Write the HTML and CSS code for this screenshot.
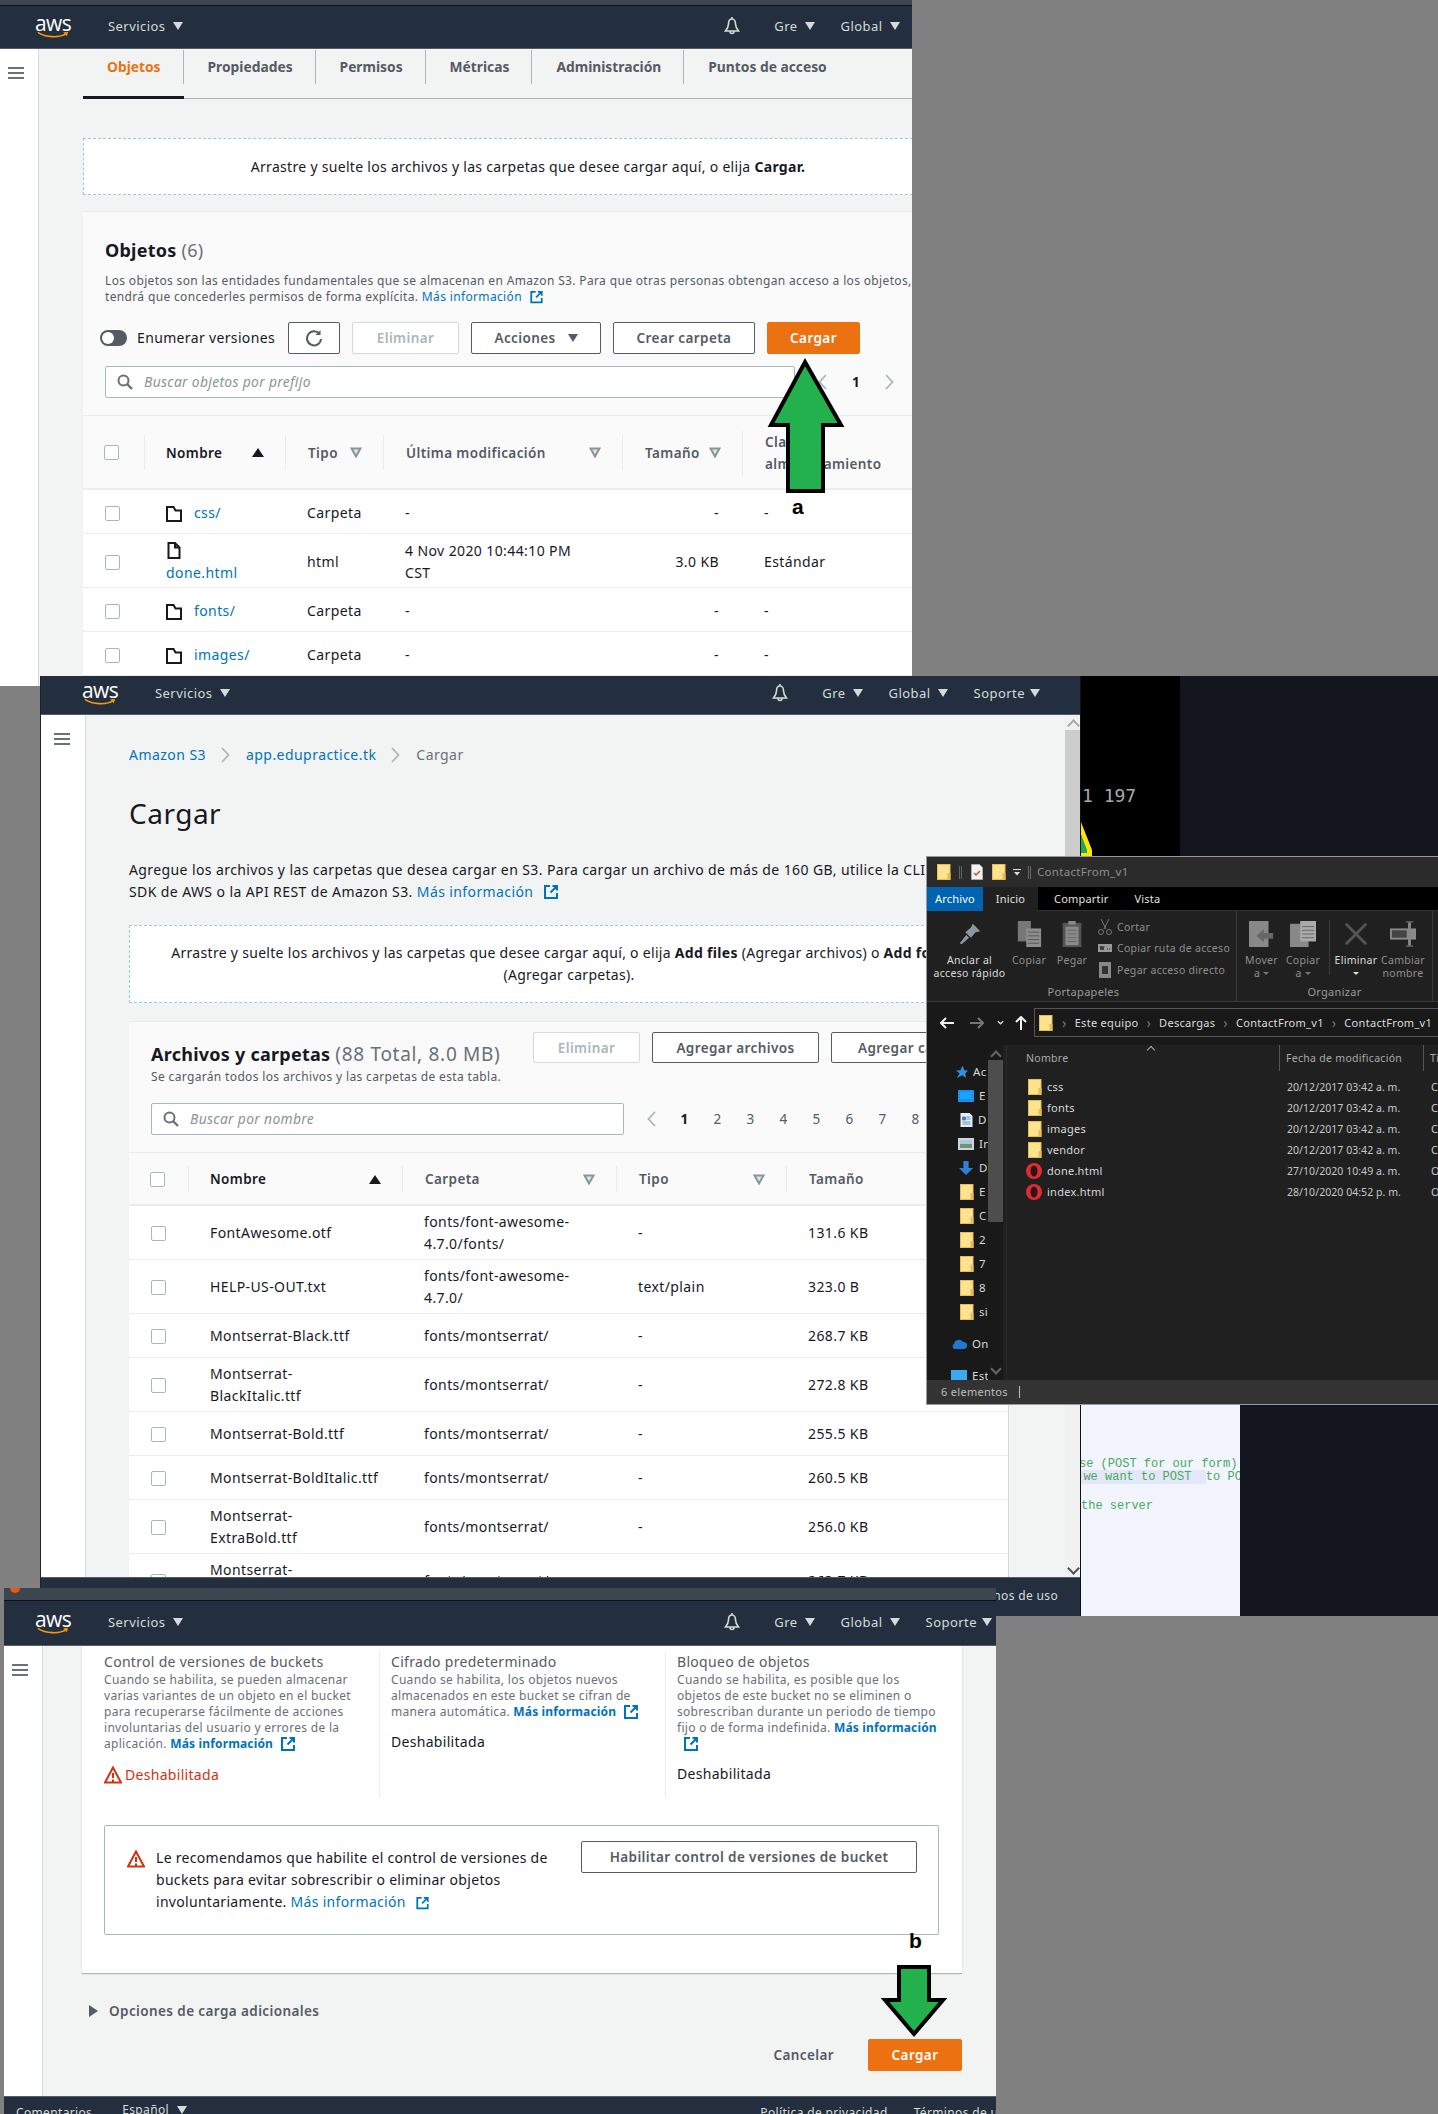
FILE: index.html
```html
<!DOCTYPE html>
<html lang="es">
<head>
<meta charset="utf-8">
<title>Amazon S3</title>
<link rel="stylesheet" href="styles.css">
</head>
<body>
<svg class="defs" aria-hidden="true">
  <symbol id="ext" viewBox="0 0 16 16"><path d="M7 2H2v12h12V9M9.500 2H14v4.500M14 2L7.500 8.500" fill="none" stroke="#0073bb" stroke-width="2"/></symbol>
  <symbol id="bell" viewBox="0 0 18 20"><path d="M9 2C6.500 2 5.500 4.500 5.500 7c0 3-1.500 5-3 7h13c-1.500-2-3-4-3-7C12.500 4.500 11.500 2 9 2zM9 0v2M7 14.500a2 2 0 0 0 4 0" fill="none" stroke="#d5dbdb" stroke-width="1.600"/></symbol>
  <symbol id="smile" viewBox="0 0 36 9"><path d="M1 1.500C10 7.500 25 8 33 3" fill="none" stroke="#f90" stroke-width="1.800"/><path d="M29.500 1.500L35 1l-1.500 5z" fill="#f90"/></symbol>
  <symbol id="burger" viewBox="0 0 16 13"><path d="M0 1h16v2H0zM0 6h16v2H0zM0 11h16v2H0z" fill="#687078"/></symbol>
  <symbol id="search" viewBox="0 0 16 16"><circle cx="6.500" cy="6.500" r="5" fill="none" stroke="#687078" stroke-width="2"/><path d="M10 10l5 5" stroke="#687078" stroke-width="2.400"/></symbol>
  <symbol id="folder" viewBox="0 0 16 17"><path d="M1 2h6.500l2 3.500H15V16H1z" fill="none" stroke="#16191f" stroke-width="2"/></symbol>
  <symbol id="file" viewBox="0 0 16 17"><path d="M2.500 1H9l4.500 4.500V16h-11zM9 1v4.500h4.500" fill="none" stroke="#16191f" stroke-width="2"/></symbol>
  <symbol id="warn" viewBox="0 0 18 18"><path d="M9 1.500L1 16.500h16zM9 7v5M9 13.500v2" fill="none" stroke="#d13212" stroke-width="2"/></symbol>
  <symbol id="yfolder" viewBox="0 0 14 16"><rect x=".5" y=".5" width="12.500" height="15" fill="#fde38e" stroke="#e8bb55"/><rect x="10.500" y="9" width="3" height="7" fill="#e8bb55"/></symbol>
  <symbol id="opera" viewBox="0 0 16 16"><circle cx="8" cy="8" r="8" fill="#e22a32"/><ellipse cx="8" cy="8" rx="3.500" ry="5.500" fill="#2a1416"/></symbol>
  <symbol id="sortd" viewBox="0 0 12 11"><path d="M1.500 1.500h9L6 9.500z" fill="#dfe4e4" stroke="#879596" stroke-width="2"/></symbol>
  <symbol id="chev-l" viewBox="0 0 9 16"><path d="M8 1L1.500 8 8 15" fill="none" stroke="#aab7b8" stroke-width="1.800"/></symbol>
  <symbol id="chev-r" viewBox="0 0 9 16"><path d="M1 1l6.500 7L1 15" fill="none" stroke="#aab7b8" stroke-width="1.800"/></symbol>
</svg>

<div class="desktop">

  <!-- Fragments of windows behind -->
  <div class="bg-black"><span class="bg-num">1 197</span>
    <svg class="bg-tri" viewBox="0 0 12 34"><path d="M0 0L11 28v6H0z" fill="#ffe600"/><path d="M0 12L6 28v3H0z" fill="#1ea55a"/></svg>
  </div>
  <div class="bg-dark-top"></div>
  <div class="bg-editor">
    <div class="code code-a">se (POST for our form)</div>
    <div class="code code-b"><span class="code-hl">e we want to POST  </span>to POST</div>
    <div class="code code-c">the server</div>
  </div>
  <div class="bg-dark-bottom"></div>

  <!-- WINDOW 1 : objects -->
  <section class="win win-objects">
    <div class="strip"></div>
    <header class="nav nav-wide">
      <div class="logo"><span class="logo-text">aws</span><svg class="logo-smile"><use href="#smile"/></svg></div>
      <span class="nav-item nav-services">Servicios<i class="caret"></i></span>
      <svg class="nav-bell"><use href="#bell"/></svg>
      <span class="nav-item nav-gre">Gre<i class="caret"></i></span>
      <span class="nav-item nav-global">Global<i class="caret"></i></span>
      <span class="nav-item nav-support">Soporte<i class="caret"></i></span>
    </header>
    <div class="layout">
      <aside class="side"><svg class="burger"><use href="#burger"/></svg></aside>
      <main class="content content-objects">
        <nav class="tabs">
          <a class="tab tab-active"><span class="tab-label">Objetos</span></a>
          <a class="tab"><span class="tab-label">Propiedades</span></a>
          <a class="tab"><span class="tab-label">Permisos</span></a>
          <a class="tab"><span class="tab-label">Métricas</span></a>
          <a class="tab"><span class="tab-label">Administración</span></a>
          <a class="tab"><span class="tab-label tab-last">Puntos de acceso</span></a>
        </nav>
        <div class="drop drop-objects"><span>Arrastre y suelte los archivos y las carpetas que desee cargar aquí, o elija <b>Cargar.</b></span></div>
        <section class="panel panel-objects">
          <div class="obj-head">
            <h2 class="panel-title">Objetos <span class="muted-count">(6)</span></h2>
            <p class="small-desc">Los objetos son las entidades fundamentales que se almacenan en Amazon S3. Para que otras personas obtengan acceso a los objetos,<br>tendrá que concederles permisos de forma explícita. <a class="link">Más información</a><svg class="ext"><use href="#ext"/></svg></p>
            <div class="toolbar">
              <span class="toggle"></span>
              <span class="toggle-label">Enumerar versiones</span>
              <button class="btn btn-refresh"><svg viewBox="0 0 18 18" class="refresh"><path d="M14.500 5A7 7 0 1 0 16 10" fill="none" stroke="#545b64" stroke-width="2"/><path d="M15.500 1v5h-5z" fill="#545b64"/></svg></button>
              <button class="btn btn-dis w107">Eliminar</button>
              <button class="btn w130">Acciones<i class="caret caret-dark"></i></button>
              <button class="btn w142">Crear carpeta</button>
              <button class="btn btn-primary w93">Cargar</button>
            </div>
            <div class="search-row">
              <div class="search search-objects"><svg class="search-ic"><use href="#search"/></svg><span>Buscar objetos por prefijo</span></div>
              <div class="pager pager-objects"><svg class="pg-arrow"><use href="#chev-l"/></svg><b>1</b><svg class="pg-arrow"><use href="#chev-r"/></svg></div>
            </div>
          </div>
          <div class="grid grid-a thead">
            <div class="th"><span class="cb"></span></div>
            <div class="th th-line strong">Nombre<i class="sort-up"></i></div>
            <div class="th th-line">Tipo<svg class="sort"><use href="#sortd"/></svg></div>
            <div class="th th-line">Última modificación<svg class="sort"><use href="#sortd"/></svg></div>
            <div class="th th-line">Tamaño<svg class="sort"><use href="#sortd"/></svg></div>
            <div class="th th-line th-two">Clase de<br>almacenamiento</div>
          </div>
          <div class="grid grid-a row">
            <div class="td"><span class="cb"></span></div>
            <div class="td"><svg class="ficon"><use href="#folder"/></svg><a class="link">css/</a></div>
            <div class="td">Carpeta</div><div class="td">-</div><div class="td td-right">-</div><div class="td">-</div>
          </div>
          <div class="grid grid-a row">
            <div class="td"><span class="cb"></span></div>
            <div class="td td-stack"><svg class="ficon"><use href="#file"/></svg><a class="link">done.html</a></div>
            <div class="td">html</div><div class="td">4 Nov 2020 10:44:10 PM<br>CST</div><div class="td td-right">3.0 KB</div><div class="td">Estándar</div>
          </div>
          <div class="grid grid-a row">
            <div class="td"><span class="cb"></span></div>
            <div class="td"><svg class="ficon"><use href="#folder"/></svg><a class="link">fonts/</a></div>
            <div class="td">Carpeta</div><div class="td">-</div><div class="td td-right">-</div><div class="td">-</div>
          </div>
          <div class="grid grid-a row">
            <div class="td"><span class="cb"></span></div>
            <div class="td"><svg class="ficon"><use href="#folder"/></svg><a class="link">images/</a></div>
            <div class="td">Carpeta</div><div class="td">-</div><div class="td td-right">-</div><div class="td">-</div>
          </div>
        </section>
      </main>
    </div>
  </section>

  <!-- WINDOW 2 : upload -->
  <section class="win win-upload">
    <header class="nav nav-upload">
      <div class="logo"><span class="logo-text">aws</span><svg class="logo-smile"><use href="#smile"/></svg></div>
      <span class="nav-item nav-services">Servicios<i class="caret"></i></span>
      <svg class="nav-bell"><use href="#bell"/></svg>
      <span class="nav-item nav-gre">Gre<i class="caret"></i></span>
      <span class="nav-item nav-global">Global<i class="caret"></i></span>
      <span class="nav-item nav-support">Soporte<i class="caret"></i></span>
    </header>
    <div class="layout layout-upload">
      <aside class="side side-upload"><svg class="burger"><use href="#burger"/></svg></aside>
      <main class="content content-upload">
        <nav class="crumbs"><a class="link">Amazon S3</a><svg class="crumb-sep"><use href="#chev-r"/></svg><a class="link">app.edupractice.tk</a><svg class="crumb-sep"><use href="#chev-r"/></svg><span class="crumb-now">Cargar</span></nav>
        <h1 class="h1">Cargar</h1>
        <p class="lead">Agregue los archivos y las carpetas que desea cargar en S3. Para cargar un archivo de más de 160 GB, utilice la CLI de AWS, los<br>SDK de AWS o la API REST de Amazon S3. <a class="link">Más información</a><svg class="ext ext-lg"><use href="#ext"/></svg></p>
        <div class="drop drop-upload"><span>Arrastre y suelte los archivos y las carpetas que desee cargar aquí, o elija <b>Add files</b> (Agregar archivos) o <b>Add folders</b><br>(Agregar carpetas).</span></div>
        <section class="panel panel-upload">
          <div class="up-head">
            <div class="up-top">
              <div class="up-title">
                <h2 class="panel-title">Archivos y carpetas <span class="muted-count count-lg">(88 Total, 8.0 MB)</span></h2>
                <p class="small-desc up-sub">Se cargarán todos los archivos y las carpetas de esta tabla.</p>
              </div>
              <button class="btn btn-dis w107 up-btn">Eliminar</button>
              <button class="btn w167 up-btn">Agregar archivos</button>
              <button class="btn w167 up-btn up-btn3">Agregar carpeta</button>
            </div>
            <div class="search-row">
              <div class="search search-upload"><svg class="search-ic"><use href="#search"/></svg><span>Buscar por nombre</span></div>
              <div class="pager pager-upload"><svg class="pg-arrow"><use href="#chev-l"/></svg><b>1</b><span>2</span><span>3</span><span>4</span><span>5</span><span>6</span><span>7</span><span>8</span></div>
            </div>
          </div>
          <div class="grid grid-b thead thead-b">
            <div class="th"><span class="cb"></span></div>
            <div class="th th-line strong">Nombre<i class="sort-up"></i></div>
            <div class="th th-line">Carpeta<svg class="sort"><use href="#sortd"/></svg></div>
            <div class="th th-line">Tipo<svg class="sort"><use href="#sortd"/></svg></div>
            <div class="th th-line">Tamaño</div>
          </div>
          <div class="grid grid-b row"><div class="td"><span class="cb"></span></div><div class="td">FontAwesome.otf</div><div class="td">fonts/font-awesome-<br>4.7.0/fonts/</div><div class="td">-</div><div class="td">131.6 KB</div></div>
          <div class="grid grid-b row"><div class="td"><span class="cb"></span></div><div class="td">HELP-US-OUT.txt</div><div class="td">fonts/font-awesome-<br>4.7.0/</div><div class="td">text/plain</div><div class="td">323.0 B</div></div>
          <div class="grid grid-b row"><div class="td"><span class="cb"></span></div><div class="td">Montserrat-Black.ttf</div><div class="td">fonts/montserrat/</div><div class="td">-</div><div class="td">268.7 KB</div></div>
          <div class="grid grid-b row"><div class="td"><span class="cb"></span></div><div class="td">Montserrat-<br>BlackItalic.ttf</div><div class="td">fonts/montserrat/</div><div class="td">-</div><div class="td">272.8 KB</div></div>
          <div class="grid grid-b row"><div class="td"><span class="cb"></span></div><div class="td">Montserrat-Bold.ttf</div><div class="td">fonts/montserrat/</div><div class="td">-</div><div class="td">255.5 KB</div></div>
          <div class="grid grid-b row"><div class="td"><span class="cb"></span></div><div class="td">Montserrat-BoldItalic.ttf</div><div class="td">fonts/montserrat/</div><div class="td">-</div><div class="td">260.5 KB</div></div>
          <div class="grid grid-b row"><div class="td"><span class="cb"></span></div><div class="td">Montserrat-<br>ExtraBold.ttf</div><div class="td">fonts/montserrat/</div><div class="td">-</div><div class="td">256.0 KB</div></div>
          <div class="grid grid-b row"><div class="td"><span class="cb"></span></div><div class="td">Montserrat-<br>ExtraBoldItalic.ttf</div><div class="td">fonts/montserrat/</div><div class="td">-</div><div class="td">263.7 KB</div></div>
        </section>
      </main>
      <div class="scroll"><span class="sc-up"></span><span class="sc-thumb"></span><span class="sc-down"></span></div>
    </div>
    <footer class="foot foot-upload"><span class="foot-right">Política de privacidad</span><span class="foot-right">Términos de uso</span></footer>
  </section>

  <!-- WINDOW 3 : file explorer -->
  <section class="win win-explorer">
    <div class="ex-title">
      <svg class="yf"><use href="#yfolder"/></svg><i class="ex-bar"></i>
      <svg class="qa-check" viewBox="0 0 12 16"><path d="M.5.5h8l3 3v12H.5z" fill="#f4f4f4" stroke="#aaa"/><path d="M3 9l2 2 4-4" fill="none" stroke="#e0481a" stroke-width="1.500"/></svg>
      <svg class="yf"><use href="#yfolder"/></svg>
      <svg class="qa-down" viewBox="0 0 8 8"><path d="M0 1h8v1H0zM1 4h6L4 7.500z" fill="#ddd"/></svg><i class="ex-bar ex-bar-last"></i>
      <span class="ex-name">ContactFrom_v1</span>
    </div>
    <div class="ex-tabs">
      <span class="ex-tab ex-tab-file">Archivo</span>
      <span class="ex-tab ex-tab-home">Inicio</span>
      <span class="ex-tab ex-tab-share">Compartir</span>
      <span class="ex-tab ex-tab-view">Vista</span>
    </div>
    <div class="ribbon">
      <div class="rib-group rib-clip">
        <div class="rib-tools">
          <div class="rib-big rib-pin bright"><svg class="rib-ic" viewBox="0 0 28 28"><path d="M17 3l8 8-5 1-5 6-6-6 6-5zM10 15l-7 9 2 1 8-7" fill="#8a98a0"/></svg><span>Anclar al<br>acceso rápido</span></div>
          <div class="rib-big rib-copy"><svg class="rib-ic" viewBox="0 0 28 28"><path d="M2 0h14v22H2z" fill="#777"/><path d="M11 8h16v20H11z" fill="#8d8d8d"/><path d="M13 12h12M13 16h12M13 20h12M13 24h12" stroke="#555"/></svg><span>Copiar</span></div>
          <div class="rib-big rib-paste"><svg class="rib-ic" viewBox="0 0 28 28"><path d="M4 2h20v26H4z" fill="#555"/><path d="M7 6h14v20H7z" fill="#8a8a8a"/><path d="M9 10h10M9 14h10M9 18h10M9 22h10" stroke="#666"/><path d="M10 0h8v4h-8z" fill="#888"/></svg><span>Pegar</span></div>
          <div class="rib-stack">
            <div class="rib-small"><svg viewBox="0 0 14 16"><path d="M3 0l5 10M11 0L6 10" stroke="#777"/><circle cx="3" cy="13" r="2.500" fill="none" stroke="#777"/><circle cx="11" cy="13" r="2.500" fill="none" stroke="#777"/></svg><span>Cortar</span></div>
            <div class="rib-small"><svg viewBox="0 0 14 16"><path d="M0 4h14v8H0z" fill="#999"/><path d="M2 6l1 4 1-4 1 4 1-4M9 9h1M11 9h1" stroke="#333" fill="none"/></svg><span>Copiar ruta de acceso</span></div>
            <div class="rib-small"><svg viewBox="0 0 14 16"><path d="M1 0h12v16H1z" fill="#888"/><path d="M4 4h6v8H4z" fill="#333"/></svg><span>Pegar acceso directo</span></div>
          </div>
        </div>
        <div class="rib-label">Portapapeles</div>
      </div>
      <div class="rib-group rib-org">
        <div class="rib-tools">
          <div class="rib-big rib-move"><svg class="rib-ic" viewBox="0 0 28 28"><path d="M0 0h21v28H0z" fill="#888"/><path d="M26 13H16V9l-8 7 8 7v-4h10z" fill="#666"/></svg><span>Mover<br>a <i class="mini-caret"></i></span></div>
          <div class="rib-big rib-copyto"><svg class="rib-ic" viewBox="0 0 28 28"><path d="M0 3h20v25H0z" fill="#888"/><path d="M11 0h17v22H11z" fill="#aaa"/><path d="M13 6h13M13 10h13M13 14h13M13 18h13" stroke="#666"/></svg><span>Copiar<br>a <i class="mini-caret"></i></span></div>
          <i class="rib-sep"></i>
          <div class="rib-big rib-del bright"><svg class="rib-ic" viewBox="0 0 28 28"><path d="M3 3l22 22M25 3L3 25" stroke="#555" stroke-width="3"/></svg><span>Eliminar<br><i class="mini-caret mini-bright"></i></span></div>
          <div class="rib-big rib-ren"><svg class="rib-ic" viewBox="0 0 28 28"><path d="M0 8h28v12H0z" fill="#8a8a8a"/><path d="M2 10h16v8H2z" fill="#444"/><path d="M20 2h2v24h-2zM17 1h8M17 27h8" stroke="#888" fill="#888"/></svg><span>Cambiar<br>nombre</span></div>
        </div>
        <div class="rib-label">Organizar</div>
      </div>
    </div>
    <div class="ex-addr">
      <svg class="ex-arrow" viewBox="0 0 14 12"><path d="M6 1L1 6l5 5M1 6h13" fill="none" stroke="#f2f2f2" stroke-width="2"/></svg>
      <svg class="ex-arrow ex-fwd" viewBox="0 0 14 12"><path d="M8 1l5 5-5 5M13 6H0" fill="none" stroke="#777" stroke-width="2"/></svg>
      <svg class="ex-hist" viewBox="0 0 8 5"><path d="M1 1l3 3 3-3" fill="none" stroke="#ddd" stroke-width="1.500"/></svg>
      <svg class="ex-arrow ex-upa" viewBox="0 0 12 14"><path d="M1 6l5-5 5 5M6 1v13" fill="none" stroke="#f2f2f2" stroke-width="2"/></svg>
      <div class="ex-path">
        <svg class="yf"><use href="#yfolder"/></svg>
        <i class="pth">&#x203A;</i><span>Este equipo</span><i class="pth">&#x203A;</i><span>Descargas</span><i class="pth">&#x203A;</i><span>ContactFrom_v1</span><i class="pth">&#x203A;</i><span>ContactFrom_v1</span>
      </div>
    </div>
    <div class="ex-main">
      <div class="ex-tree">
        <div class="tr tr-pin"><svg class="tr-ic" viewBox="0 0 14 14"><path d="M8 0l2 5 4 .5-3 3 1 5-4-3-6 3 3-5-4-3 5-.5z" fill="#2f8fe0"/></svg><span>Ac</span></div>
        <div class="tr"><svg class="tr-ic tr-ic16" viewBox="0 0 16 12"><path d="M0 0h16v12H0z" fill="#1e8fe8"/><path d="M2 2h12v7H2z" fill="#19a1ff"/></svg><span>E</span></div>
        <div class="tr"><svg class="tr-ic" viewBox="0 0 12 14"><path d="M0 0h9l3 3v11H0z" fill="#e8eef4"/><path d="M2 4h3v3H2zM6 4h4M6 6h4M2 9h8M2 11h8" stroke="#3d7fc4" fill="#3d7fc4" stroke-width=".8"/></svg><span>D</span></div>
        <div class="tr"><svg class="tr-ic tr-ic16" viewBox="0 0 16 12"><path d="M0 0h16v12H0z" fill="#cfd6dc"/><path d="M2 2h12v8H2z" fill="#6f9278"/><path d="M2 2h12v4H2z" fill="#a8c8e0"/></svg><span>Ir</span></div>
        <div class="tr"><svg class="tr-ic tr-ic16" viewBox="0 0 16 16"><path d="M5 0h6v8h5l-8 8-8-8h5z" fill="#2f7fd6"/></svg><span>D</span></div>
        <div class="tr"><svg class="yf"><use href="#yfolder"/></svg><span>E</span></div>
        <div class="tr"><svg class="yf"><use href="#yfolder"/></svg><span>C</span></div>
        <div class="tr"><svg class="yf"><use href="#yfolder"/></svg><span>2</span></div>
        <div class="tr"><svg class="yf"><use href="#yfolder"/></svg><span>7</span></div>
        <div class="tr"><svg class="yf"><use href="#yfolder"/></svg><span>8</span></div>
        <div class="tr"><svg class="yf"><use href="#yfolder"/></svg><span>si</span></div>
        <div class="tr tr-cloud"><svg class="tr-ic tr-ic16" viewBox="0 0 16 10"><path d="M3 10a3 3 0 0 1 0-5 5 5 0 0 1 9-2 3.500 3.500 0 0 1 1 7z" fill="#1f78d1"/></svg><span>On</span></div>
        <div class="tr tr-pc"><svg class="tr-ic tr-ic16" viewBox="0 0 16 12"><path d="M0 0h16v10H0z" fill="#3aa9ee"/><path d="M6 10h4v2H6z" fill="#aaa"/></svg><span>Est</span></div>
      </div>
      <div class="ex-scroll"><i class="ex-sc-up"></i><i class="ex-sc-thumb"></i><i class="ex-sc-down"></i></div>
      <div class="ex-files">
        <div class="ex-cols">
          <span class="col-name">Nombre<i class="col-sort"></i></span>
          <span class="col-date">Fecha de modificación</span>
          <span class="col-type">Tipo</span>
        </div>
        <div class="ex-row"><svg class="yf"><use href="#yfolder"/></svg><span class="f-name">css</span><span class="f-date">20/12/2017 03:42 a. m.</span><span class="f-type">Carpeta de archivos</span></div>
        <div class="ex-row"><svg class="yf"><use href="#yfolder"/></svg><span class="f-name">fonts</span><span class="f-date">20/12/2017 03:42 a. m.</span><span class="f-type">Carpeta de archivos</span></div>
        <div class="ex-row"><svg class="yf"><use href="#yfolder"/></svg><span class="f-name">images</span><span class="f-date">20/12/2017 03:42 a. m.</span><span class="f-type">Carpeta de archivos</span></div>
        <div class="ex-row"><svg class="yf"><use href="#yfolder"/></svg><span class="f-name">vendor</span><span class="f-date">20/12/2017 03:42 a. m.</span><span class="f-type">Carpeta de archivos</span></div>
        <div class="ex-row"><svg class="yf yf-op"><use href="#opera"/></svg><span class="f-name">done.html</span><span class="f-date">27/10/2020 10:49 a. m.</span><span class="f-type">Opera Web</span></div>
        <div class="ex-row"><svg class="yf yf-op"><use href="#opera"/></svg><span class="f-name">index.html</span><span class="f-date">28/10/2020 04:52 p. m.</span><span class="f-type">Opera Web</span></div>
      </div>
    </div>
    <div class="ex-status"><span>6 elementos</span><i></i></div>
  </section>

  <!-- WINDOW 4 : upload bottom -->
  <section class="win win-confirm">
    <div class="strip strip-tall"><i class="dot"></i></div>
    <header class="nav nav-confirm">
      <div class="logo"><span class="logo-text">aws</span><svg class="logo-smile"><use href="#smile"/></svg></div>
      <span class="nav-item nav-services">Servicios<i class="caret"></i></span>
      <svg class="nav-bell"><use href="#bell"/></svg>
      <span class="nav-item nav-gre">Gre<i class="caret"></i></span>
      <span class="nav-item nav-global">Global<i class="caret"></i></span>
      <span class="nav-item nav-support">Soporte<i class="caret"></i></span>
    </header>
    <div class="layout layout-confirm">
      <aside class="side"><svg class="burger"><use href="#burger"/></svg></aside>
      <main class="content content-confirm">
        <section class="card">
          <div class="props">
            <div class="prop prop-first">
              <h3 class="prop-title">Control de versiones de buckets</h3>
              <p class="prop-desc">Cuando se habilita, se pueden almacenar<br>varias variantes de un objeto en el bucket<br>para recuperarse fácilmente de acciones<br>involuntarias del usuario y errores de la<br>aplicación. <a class="link-b">Más información</a><svg class="ext"><use href="#ext"/></svg></p>
              <div class="prop-value prop-bad"><svg class="warn-sm"><use href="#warn"/></svg>Deshabilitada</div>
            </div>
            <div class="prop">
              <h3 class="prop-title">Cifrado predeterminado</h3>
              <p class="prop-desc">Cuando se habilita, los objetos nuevos<br>almacenados en este bucket se cifran de<br>manera automática. <a class="link-b">Más información</a><svg class="ext"><use href="#ext"/></svg></p>
              <div class="prop-value">Deshabilitada</div>
            </div>
            <div class="prop">
              <h3 class="prop-title">Bloqueo de objetos</h3>
              <p class="prop-desc">Cuando se habilita, es posible que los<br>objetos de este bucket no se eliminen o<br>sobrescriban durante un periodo de tiempo<br>fijo o de forma indefinida. <a class="link-b">Más información</a><br><svg class="ext ext-own"><use href="#ext"/></svg></p>
              <div class="prop-value">Deshabilitada</div>
            </div>
          </div>
          <div class="alert">
            <svg class="alert-ic"><use href="#warn"/></svg>
            <p class="alert-text">Le recomendamos que habilite el control de versiones de<br>buckets para evitar sobrescribir o eliminar objetos<br>involuntariamente. <a class="link">Más información</a><svg class="ext ext-alert"><use href="#ext"/></svg></p>
            <button class="btn alert-btn">Habilitar control de versiones de bucket</button>
          </div>
        </section>
        <div class="more"><i class="more-tri"></i>Opciones de carga adicionales</div>
        <div class="actions"><span class="cancel">Cancelar</span><button class="btn btn-primary w94">Cargar</button></div>
      </main>
    </div>
    <footer class="foot foot-confirm"><span class="foot-left">Comentarios</span><span class="foot-lang">Español<i class="caret"></i></span><span class="foot-right">Política de privacidad</span><span class="foot-right">Términos de uso</span></footer>
  </section>

  <!-- Annotations -->
  <svg class="arrow arrow-up" viewBox="0 0 85 145"><path d="M40 7L76 70H58V136H23V70H6z" fill="#22b14c" stroke="#000" stroke-width="4"/></svg>
  <span class="note note-a">a</span>
  <svg class="arrow arrow-down" viewBox="0 0 72 82"><path d="M21 7H51V40H65L36 74 7 40H21z" fill="#22b14c" stroke="#000" stroke-width="4"/></svg>
  <span class="note note-b">b</span>
</div>
</body>
</html>
```

FILE: styles.css
```css
* { box-sizing: border-box; }
html, body { margin: 0; padding: 0; }
body { background: #808080; font: 14px/22px "Noto Sans", "Open Sans", sans-serif; letter-spacing: .35px; color: #16191f; }
p, h1, h2, h3 { margin: 0; font-weight: normal; }
i { font-style: normal; }
button { font: inherit; }
.defs { position: absolute; width: 0; height: 0; }

.desktop { position: relative; width: 1438px; height: 2114px; overflow: hidden; background: #808080; }
.win { position: absolute; overflow: hidden; display: flex; flex-direction: column; }

/* Background fragments */
.bg-black { position: absolute; left: 1081px; top: 676px; width: 99px; height: 180px; background: #000; overflow: hidden; }
.bg-num { position: absolute; left: 1px; top: 108px; font: 18px/24px "DejaVu Sans Mono", monospace; color: #aaa; white-space: pre; letter-spacing: 0; }
.bg-tri { position: absolute; left: 0; top: 146px; width: 12px; height: 34px; }
.bg-dark-top { position: absolute; left: 1180px; top: 676px; width: 258px; height: 180px; background: #14161f; }
.bg-editor { position: absolute; left: 1081px; top: 1405px; width: 159px; height: 211px; background: #f2f4fe; overflow: hidden; }
.bg-dark-bottom { position: absolute; left: 1240px; top: 1405px; width: 198px; height: 211px; background: #14161f; }
.code { position: absolute; left: -2px; font: 12px/14px "Liberation Mono", monospace; letter-spacing: 0; color: #49a95a; white-space: pre; }
.code-a { top: 52px; }
.code-b { top: 65px; left: -12px; }
.code-c { top: 94px; left: 0; }
.code-hl { background: #e3e7f8; }

/* Window placement */
.win-objects { left: 0; top: 0; width: 912px; height: 686px; background: #fff; }
.win-upload { left: 40px; top: 676px; width: 1041px; height: 940px; background: #fff; border-left: 1px solid #222; border-right: 1px solid #111; }
.win-explorer { left: 926px; top: 856px; width: 512px; height: 549px; border: 1px solid #9a9a9a; border-right: 0; background: #202020; }
.win-confirm { left: 4px; top: 1588px; width: 992px; height: 526px; background: #fff; }

/* Nav */
.strip { height: 6px; background: #3b4650; border-bottom: 1px solid #111; flex: none; }
.strip-tall { height: 13px; position: relative; }
.dot { position: absolute; left: 6px; top: -5px; width: 10px; height: 10px; border-radius: 50%; background: #e8590c; }
.nav { flex: none; height: 43px; padding-bottom: 2px; background: #232f3e; border-bottom: 1px solid #545b64; display: flex; align-items: center; color: #d5dbdb; font-size: 13px; letter-spacing: .45px; }
.nav-wide { width: 996px; padding-left: 35px; }
.nav-upload { height: 39px; padding-left: 41px; padding-bottom: 4px; }
.nav-confirm { height: 45px; padding-left: 31px; }
.logo { width: 36px; height: 24px; position: relative; color: #fff; }
.logo-text { display: block; font: 21px/19px "Open Sans", sans-serif; letter-spacing: -.6px; text-align: center; }
.logo-smile { position: absolute; left: 0; top: 17px; width: 36px; height: 8px; }
.nav-item { display: flex; align-items: center; white-space: nowrap; }
.nav-services { margin-left: 37px; }
.nav-bell { width: 18px; height: 20px; margin-left: auto; margin-top: 2px; }
.nav-gre { margin-left: 33px; }
.nav-global { margin-left: 26px; }
.nav-support { margin-left: 26px; margin-right: 4px; }
.nav-upload .nav-support { margin-right: 40px; }
.caret { display: inline-block; width: 0; height: 0; border: 5.500px solid transparent; border-top: 8px solid #d5dbdb; border-bottom: 0; margin-left: 7px; }
.nav-support .caret { margin-left: 5px; }
.caret-dark { border-top-color: #545b64; margin-left: 12px; }

/* Layout */
.layout { flex: 1; display: flex; min-height: 0; }
.side { flex: none; width: 39px; background: #fff; border-right: 1px solid #d5dbdb; padding: 17px 0 0 8px; }
.side-upload { width: 45px; padding-left: 13px; }
.burger { display: block; width: 16px; height: 13px; }
.content { flex: 1; min-width: 0; background: #f2f3f3; overflow: hidden; }
.content-objects { padding-left: 44px; }
.content-upload { padding-left: 43px; }
.content-confirm { padding-left: 39px; }

/* Tabs */
.tabs { display: flex; height: 50px; border-bottom: 1px solid #aab7b8; width: 890px; }
.tab { height: 50px; padding-top: 1px; font-weight: 700; color: #545b64; font-size: 13.800px; letter-spacing: 0; }
.tab-active { color: #ec7211; border-bottom: 3px solid #16191f; }
.tab-label { display: block; height: 34px; line-height: 33px; padding: 0 22px 0 24px; border-right: 1px solid #aab7b8; white-space: nowrap; }
.tab-last { border-right: 0; }

/* Drop zones */
.drop { background: #fff; border: 1px dashed #8fcbe6; display: flex; align-items: center; justify-content: center; text-align: center; white-space: nowrap; letter-spacing: .3px; }
.drop-objects { margin-top: 39px; height: 57px; width: 890px; }
.drop-upload { margin-top: 22px; height: 78px; width: 880px; }
.drop b { font-weight: 700; }

/* Panels */
.panel { background: #fff; box-shadow: 0 -1px 0 #eaeded; }
.panel-objects { margin-top: 17px; width: 890px; }
.panel-upload { margin-top: 19px; width: 880px; border-right: 1px solid #d5dbdb; }
.obj-head { height: 203px; padding: 26px 22px 0; background: #fafafa; }
.panel-title { font-size: 18px; line-height: 24px; font-weight: 700; white-space: nowrap; letter-spacing: .25px; }
.muted-count { font-weight: 400; color: #687078; }
.count-lg { font-size: 19px; letter-spacing: .7px; }
.small-desc { margin-top: 11px; font-size: 12px; line-height: 16px; color: #545b64; white-space: nowrap; }
.link { color: #0073bb; }
.link-b { color: #0073bb; font-weight: 700; letter-spacing: .15px; }
.ext { display: inline-block; width: 15px; height: 14px; margin-left: 7px; vertical-align: -3px; }
.ext-lg { width: 16px; height: 16px; vertical-align: -3px; margin-left: 10px; }

.toolbar { margin-top: 17px; height: 32px; display: flex; align-items: center; }
.toggle { width: 27px; height: 16px; margin-left: -5px; border-radius: 8px; background: #545b64; position: relative; }
.toggle::after { content: ""; position: absolute; left: 2px; top: 2px; width: 12px; height: 12px; border-radius: 50%; background: #fff; }
.toggle-label { margin-left: 10px; width: 151px; white-space: nowrap; }

.btn { height: 32px; padding: 0; border: 1px solid #545b64; border-radius: 2px; background: #fff; color: #545b64; font-weight: 600; font-size: 13.500px; letter-spacing: .4px; display: flex; align-items: center; justify-content: center; white-space: nowrap; flex: none; margin-right: 12px; }
.btn-refresh { width: 52px; }
.refresh { width: 18px; height: 18px; }
.btn-dis { border-color: #d5dbdb; color: #aab7b8; }
.btn-primary { border-color: #ec7211; background: #ec7211; color: #fff; margin-right: 0; }
.w107 { width: 107px; } .w130 { width: 130px; } .w142 { width: 142px; } .w93 { width: 93px; } .w94 { width: 94px; } .w167 { width: 167px; }

.search-row { display: flex; align-items: center; margin-top: 12px; }
.search { height: 32px; flex: none; background: #fff; border: 1px solid #aab7b8; border-radius: 2px; display: flex; align-items: center; padding-left: 11px; color: #879596; font-style: italic; font-size: 13.800px; white-space: nowrap; }
.search-objects { width: 690px; }
.search-upload { width: 473px; }
.search-ic { width: 16px; height: 16px; margin-right: 11px; flex: none; }
.pager { display: flex; align-items: center; color: #545b64; font-size: 13.500px; }
.pager b { color: #16191f; }
.pager span, .pager b { display: block; width: 33px; text-align: center; }
.pg-arrow { width: 9px; height: 16px; flex: none; display: block; }
.pager-objects { margin-left: 23px; }
.pager-objects b { width: 58px; }
.pager-upload { margin-left: 23px; }
.pager-upload b { margin-left: 12px; }

/* Tables */
.grid { display: grid; }
.grid-a { grid-template-columns: 61px 141px 98px 239px 120px 1fr; }
.grid-b { grid-template-columns: 59px 214px 214px 170px 1fr; }
.thead { height: 75px; background: #fafafa; border-top: 1px solid #eaeded; border-bottom: 2px solid #eaeded; color: #545b64; font-weight: 600; font-size: 13.500px; letter-spacing: .4px; }
.thead-b { height: 54px; }
.th { display: flex; align-items: center; justify-content: space-between; margin: 19px 0 18px; padding: 0 21px 0 21px; white-space: nowrap; }
.th:nth-child(n+3) { padding-left: 22px; }
.thead-b .th { margin: 13px 0 12px; }
.th-line { border-left: 1px solid #eaeded; }
.th-two { display: block; line-height: 22px; margin: 15px 0 12px !important; padding-right: 0; }
.strong { color: #16191f; }
.row { background: #fff; min-height: 44px; padding: 5px 0 4px; border-bottom: 1px solid #eaeded; letter-spacing: .4px; }
.grid-a.row { padding: 6px 0 3px; }
.td { display: flex; align-items: center; padding-left: 22px; white-space: nowrap; }
.td-right { justify-content: flex-end; padding-right: 23px; }
.td:nth-child(n+3) { display: block; align-self: center; }
.td-right:nth-child(n+3) { text-align: right; }
.td-stack { flex-direction: column; align-items: flex-start; }
.td-stack .ficon { margin: 2px 0 3px; }
.cb { display: block; width: 15px; height: 15px; border: 1px solid #aab7b8; border-radius: 2px; background: #fff; }
.ficon { width: 16px; height: 17px; margin-right: 12px; flex: none; }
.sort { width: 12px; height: 11px; flex: none; }
.sort-up { width: 0; height: 0; border: 6px solid transparent; border-bottom: 9px solid #16191f; border-top: 0; }

/* Upload */
.crumbs { padding-top: 29px; display: flex; align-items: center; height: 51px; letter-spacing: .45px; font-size: 14px; }
.crumb-sep { width: 9px; height: 16px; margin: 0 16px 0 15px; flex: none; }
.crumb-now { color: #687078; }
.h1 { margin-top: 27px; font-size: 28px; line-height: 40px; letter-spacing: .5px; }
.lead { margin-top: 26px; white-space: nowrap; letter-spacing: .4px; }
.up-head { height: 130px; padding: 0 22px; background: #fafafa; }
.up-top { display: flex; height: 81px; }
.up-title { width: 382px; padding-top: 20px; flex: none; }
.up-sub { margin-top: 3px; }
.up-btn { margin-top: 10px; height: 31px; }
.up-head .search-row { margin-top: 0; }
.scroll { flex: none; width: 15px; background: #f1f1f1; display: flex; flex-direction: column; position: relative; }
.sc-up, .sc-down { height: 15px; flex: none; position: relative; }
.sc-up::after, .sc-down::after { content: ""; position: absolute; left: 4px; width: 7px; height: 7px; border-top: 2px solid #aaa; border-left: 2px solid #aaa; transform: rotate(45deg); top: 6px; }
.sc-down::after { transform: rotate(225deg); top: 2px; border-color: #505050; }
.sc-thumb { flex: 1; background: linear-gradient(#cdcdcd 0, #cdcdcd 100%) no-repeat top / 100% 300px; }
.foot { flex: none; background: #232f3e; border-top: 1px solid #545b64; color: #d5dbdb; font-size: 12px; display: flex; white-space: nowrap; }
.foot-upload { height: 39px; align-items: center; justify-content: flex-end; padding: 0 22px 3px 0; }
.foot-upload .foot-right { margin-left: 26px; }

/* Explorer */
.win-explorer { font: 11px/14px "Noto Sans", sans-serif; letter-spacing: .3px; color: #d8d8d8; }
.ex-title { flex: none; height: 30px; background: #2b2b2b; display: flex; align-items: center; padding-left: 10px; color: #8f8f8f; }
.yf { width: 14px; height: 16px; flex: none; display: block; }
.ex-bar { width: 3px; height: 13px; border-left: 1px solid #666; border-right: 1px solid #666; margin: 0 9px 0 8px; }
.ex-bar-last { margin: 0 6px 0 7px; }
.qa-check { width: 12px; height: 16px; margin-right: 9px; }
.qa-down { width: 8px; height: 8px; margin-left: 7px; }
.ex-name { font-size: 11.500px; }
.ex-tabs { flex: none; height: 24px; background: #000; display: flex; align-items: center; color: #e0e0e0; letter-spacing: .2px; border-bottom: 1px solid #333; }
.ex-tab { display: flex; align-items: center; height: 24px; justify-content: center; }
.ex-tab-file { width: 56px; background: #0063b1; color: #fff; }
.ex-tab-home { width: 55px; background: #202020; }
.ex-tab-share { margin-left: 16px; }
.ex-tab-view { margin-left: 26px; }

.ribbon { flex: none; height: 91px; display: flex; background: #202020; border-bottom: 1px solid #3a3a3a; }
.rib-group { flex: none; display: flex; flex-direction: column; border-right: 1px solid #3a3a3a; }
.rib-clip { width: 310px; }
.rib-org { width: 196px; }
.rib-tools { height: 74px; display: flex; padding-top: 9px; }
.rib-label { text-align: center; color: #9a9a9a; }
.rib-clip .rib-label { padding-left: 4px; }
.rib-big { flex: none; display: flex; flex-direction: column; align-items: center; text-align: center; color: #8f8f8f; line-height: 13px; font-size: 10.500px; white-space: nowrap; }
.rib-ic { width: 26px; height: 28px; margin-bottom: 6px; flex: none; }
.bright { color: #dcdcdc; }
.rib-pin { width: 71px; margin-left: 7px; }
.rib-copy { width: 36px; margin-left: 6px; }
.rib-paste { width: 32px; margin-left: 9px; }
.rib-stack { margin-left: 10px; margin-top: -4px; }
.rib-small { display: flex; align-items: center; height: 21.500px; color: #8f8f8f; white-space: nowrap; font-size: 10.500px; }
.rib-small svg { width: 14px; height: 16px; margin-right: 5px; flex: none; }
.rib-move { width: 33px; margin-left: 8px; }
.rib-copyto { width: 34px; margin-left: 8px; }
.rib-sep { width: 1px; height: 55px; background: #3a3a3a; margin: 0 5px 0 9px; }
.rib-del { width: 42px; }
.rib-ren { width: 44px; margin-left: 4px; }
.mini-caret { display: inline-block; width: 0; height: 0; border: 3px solid transparent; border-top: 3px solid #777; border-bottom: 0; vertical-align: 2px; }
.mini-bright { border-top-color: #ddd; }

.ex-addr { flex: none; height: 43px; padding-bottom: 2px; background: #191919; display: flex; align-items: center; padding-left: 13px; color: #dcdcdc; }
.ex-arrow { width: 14px; height: 12px; flex: none; }
.ex-fwd { margin-left: 16px; }
.ex-hist { width: 8px; height: 5px; margin-left: 13px; }
.ex-upa { width: 12px; height: 14px; margin-left: 11px; }
.ex-path { margin-left: 7px; width: 460px; height: 29px; border: 1px solid #555; border-right: 0; display: flex; align-items: center; padding-left: 4px; white-space: nowrap; font-size: 11px; }
.pth { color: #777; margin: 0 8px; font-size: 14px; }
.pth:first-of-type { margin-left: 9px; }

.ex-main { flex: 1; min-height: 0; display: flex; background: #202020; }
.ex-tree { flex: none; width: 61px; background: #191919; overflow: hidden; padding-top: 15px; position: relative; }
.tr { height: 24px; display: flex; align-items: center; padding-left: 33px; white-space: nowrap; overflow: hidden; font-size: 11.500px; }
.tr > span { margin-left: 5px; }
.tr-ic { width: 13px; height: 14px; flex: none; }
.tr-ic16 { width: 16px; margin-left: -2px; }
.tr-pin { padding-left: 28px; }
.tr-cloud { margin-top: 8px; padding-left: 26px; }
.tr-cloud > span { margin-left: 5px; }
.tr-pc { margin-top: 8px; padding-left: 26px; }
.ex-scroll { flex: none; width: 15px; background: #191919; display: flex; flex-direction: column; margin-right: 3px; }
.ex-sc-up, .ex-sc-down { height: 15px; flex: none; position: relative; }
.ex-sc-up::after, .ex-sc-down::after { content: ""; position: absolute; left: 4px; top: 7px; width: 6px; height: 6px; border-top: 2px solid #666; border-left: 2px solid #666; transform: rotate(45deg); }
.ex-sc-thumb { height: 162px; flex: none; background: #4d4d4d; }
.ex-sc-down { margin-top: auto; }
.ex-sc-down::after { transform: rotate(225deg); top: 0; }
.ex-files { flex: 1; min-width: 0; border-left: 1px solid #2a2a2a; background: #202020; overflow: hidden; }
.ex-cols { height: 26px; margin-bottom: 5px; display: flex; align-items: center; color: #aaa; white-space: nowrap; position: relative; font-size: 10.500px; }
.col-name { flex: none; width: 273px; padding-left: 19px; height: 26px; line-height: 26px; border-right: 1px solid #555; position: relative; }
.col-sort { position: absolute; left: 141px; top: 2px; width: 6px; height: 6px; border-top: 1px solid #aaa; border-left: 1px solid #aaa; transform: rotate(45deg); }
.col-date { flex: none; width: 144px; padding-left: 6px; height: 26px; line-height: 26px; border-right: 1px solid #555; }
.col-type { flex: none; padding-left: 6px; }
.ex-row { height: 21px; display: flex; align-items: center; padding-left: 21px; white-space: nowrap; font-size: 11px; letter-spacing: .25px; }
.yf-op { width: 16px; height: 16px; margin-left: -2px; }
.f-name { flex: none; width: 240px; margin-left: 5px; }
.f-date { flex: none; width: 144px; color: #c8c8c8; letter-spacing: .05px; font-size: 10.500px; }
.f-type { flex: none; color: #c8c8c8; }
.ex-status { flex: none; height: 24px; background: #333; display: flex; align-items: center; padding-left: 14px; color: #bdbdbd; }
.ex-status i { width: 1px; height: 12px; background: #bbb; margin-left: 11px; }

/* Confirm window */
.layout-confirm { height: 450px; flex: none; }
.card { width: 880px; height: 327px; background: #fff; box-shadow: 0 1px 1px #aab7b8; padding: 6px 22px 0; }
.props { display: flex; height: 145px; }
.prop { flex: none; width: 286px; padding-left: 11px; border-left: 1px solid #eaeded; white-space: nowrap; }
.prop-first { width: 275px; padding-left: 0; border-left: 0; }
.prop-title { font-size: 14px; line-height: 20px; color: #545b64; letter-spacing: .3px; }
.prop-desc { font-size: 12px; line-height: 16px; color: #687078; letter-spacing: .3px; }
.prop-desc .ext { width: 16px; height: 16px; vertical-align: -4px; }
.prop-value { margin-top: 11px; letter-spacing: .3px; }
.prop-bad { color: #d13212; display: flex; align-items: center; margin-top: 12px; }
.warn-sm { width: 18px; height: 18px; margin-right: 3px; }
.ext-own { margin-left: 6px; }
.alert { margin-top: 28px; height: 110px; width: 835px; border: 1px solid #aab7b8; border-radius: 2px; display: flex; align-items: flex-start; padding: 21px 0 0 22px; position: relative; }
.alert-ic { width: 18px; height: 18px; margin: 3px 11px 0 0; flex: none; }
.alert-text { width: 425px; flex: none; white-space: nowrap; letter-spacing: .3px; }
.ext-alert { margin-left: 9px; }
.alert-btn { width: 336px; margin-top: -6px; }
.more { margin-top: 27px; display: flex; align-items: center; color: #545b64; font-weight: 600; font-size: 13.500px; letter-spacing: .4px; padding-left: 7px; }
.more-tri { width: 0; height: 0; border: 6px solid transparent; border-left: 9px solid #545b64; border-right: 0; margin-right: 11px; }
.actions { width: 880px; margin-top: 17px; display: flex; justify-content: flex-end; align-items: center; }
.cancel { margin-right: 34px; color: #545b64; font-weight: 600; font-size: 13.500px; letter-spacing: .4px; }
.foot-confirm { width: 1008px; height: 19px; padding-top: 7px; line-height: 18px; padding-left: 12px; }
.foot-lang { margin-left: 30px; display: flex; align-items: center; }
.foot-lang .caret { margin-left: 8px; }
.foot-confirm .foot-right:nth-child(3) { margin-left: auto; }
.foot-confirm .foot-right:nth-child(4) { margin-left: 26px; }

/* Annotations */
.arrow { position: absolute; }
.arrow-up { left: 765px; top: 355px; width: 85px; height: 145px; }
.arrow-down { left: 878px; top: 1960px; width: 72px; height: 82px; }
.note { position: absolute; font: 700 21px/24px "Liberation Sans", sans-serif; letter-spacing: 0; color: #000; }
.note-a { left: 792px; top: 495px; }
.note-b { left: 909px; top: 1929px; }
```
